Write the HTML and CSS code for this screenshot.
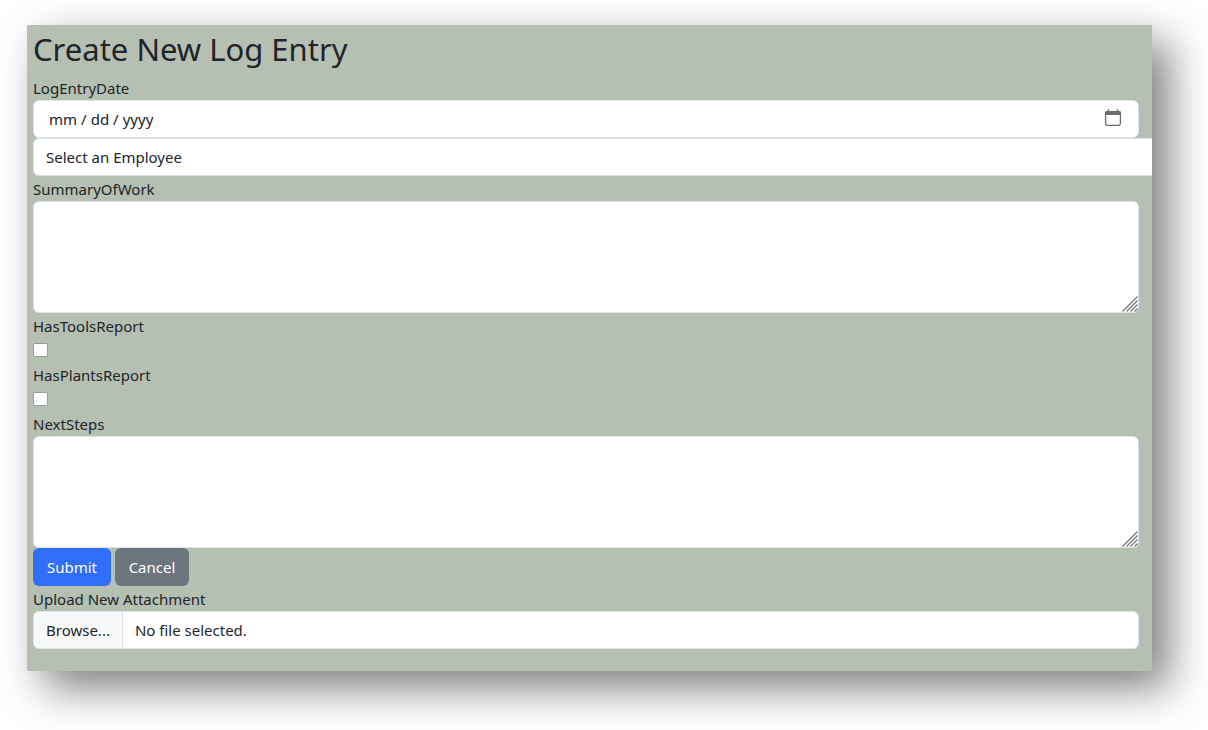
FILE: index.html
```html
<!DOCTYPE html>
<html lang="en-US">
<head>
<meta charset="utf-8">
<meta name="viewport" content="width=device-width, initial-scale=1">
<title>Create New Log Entry</title>
<link rel="stylesheet" href="styles.css">
</head>
<body>
<main class="panel">
  <h2 class="title">Create New Log Entry</h2>
  <form>
    <label class="label" for="entry-date">LogEntryDate</label>
    <div class="field">
      <input class="control date" type="date" id="entry-date">
      <svg class="calendar" viewBox="0 0 18 18" aria-hidden="true">
        <path d="M1 3.500Q1 2 2.500 2H15.500Q17 2 17 3.500V6H1Z" fill="#6b6b70"/>
        <path d="M4.500 1V3M13.500 1V3" stroke="#6b6b70" stroke-width="1.600" stroke-linecap="round"/>
        <rect x="1.600" y="3" width="14.800" height="13.300" rx="1.800" fill="none" stroke="#6b6b70" stroke-width="1.300"/>
      </svg>
    </div>
    <select class="control employee" aria-label="Employee">
      <option>Select an Employee</option>
    </select>
    <label class="label" for="summary">SummaryOfWork</label>
    <div class="field">
      <textarea class="control area" id="summary"></textarea>
      <svg class="grip" viewBox="0 0 16 16" aria-hidden="true"><path d="M0.500 15.500L15.500 0.500M4.500 15.500L15.500 4.500M8.500 15.500L15.500 8.500M12.500 15.500L15.500 12.500"/></svg>
    </div>
    <label class="label" for="tools">HasToolsReport</label>
    <div class="check-row"><input class="check" type="checkbox" id="tools"></div>
    <label class="label" for="plants">HasPlantsReport</label>
    <div class="check-row"><input class="check" type="checkbox" id="plants"></div>
    <label class="label" for="next">NextSteps</label>
    <div class="field">
      <textarea class="control area" id="next"></textarea>
      <svg class="grip" viewBox="0 0 16 16" aria-hidden="true"><path d="M0.500 15.500L15.500 0.500M4.500 15.500L15.500 4.500M8.500 15.500L15.500 8.500M12.500 15.500L15.500 12.500"/></svg>
    </div>
    <div class="actions">
      <button class="btn primary" type="submit">Submit</button>
      <button class="btn secondary" type="button">Cancel</button>
    </div>
    <label class="label" for="attachment">Upload New Attachment</label>
    <div class="field">
      <input class="file-input" type="file" id="attachment">
      <label class="control file" for="attachment">
        <span class="browse">Browse...</span>
        <span class="file-name">No file selected.</span>
      </label>
    </div>
  </form>
</main>
</body>
</html>
```
FILE: styles.css
```css
* {
  box-sizing: border-box;
}

body {
  margin: 0;
  padding: 25px 56px 59px 27px;
  background: #fff;
  color: #212529;
  font: 15px/24px "Segoe UI", "Noto Sans", sans-serif;
}

.panel {
  padding: 5px 13px 22px 6px;
  overflow: hidden;
  background: #b5c0b3;
  box-shadow: 17px 17px 40px rgba(0, 0, 0, 0.5);
}

.title {
  margin: 0 0 7px;
  font-size: 31px;
  font-weight: 400;
  line-height: 38px;
}

.label {
  display: block;
  padding-top: 2px;
  line-height: 23px;
}

.field {
  position: relative;
}

.control {
  display: block;
  width: 100%;
  height: 38px;
  padding: 6px 12px;
  border: 1px solid #dee2e6;
  border-radius: 6px;
  background: #fff;
  color: #212529;
  font: inherit;
}

.date {
  padding-left: 14px;
}

.date::-webkit-datetime-edit-fields-wrapper {
  padding: 0;
}

.date::-webkit-datetime-edit-text {
  padding: 0 3px;
}

.date::-webkit-calendar-picker-indicator {
  opacity: 0;
}

.calendar {
  position: absolute;
  top: 9px;
  right: 17px;
  width: 18px;
  height: 18px;
  pointer-events: none;
}

.employee {
  width: calc(100% + 40px);
  appearance: none;
}

.area {
  height: 112px;
  resize: vertical;
}

.area::-webkit-resizer {
  background: transparent;
}

.grip {
  position: absolute;
  right: 1px;
  bottom: 1px;
  width: 16px;
  height: 16px;
  fill: none;
  stroke: #77777a;
  stroke-width: 1.3;
  pointer-events: none;
}

.check-row {
  display: flex;
  align-items: center;
  height: 24px;
}

.check {
  width: 15px;
  height: 14px;
  margin: 0;
  appearance: none;
  border: 1px solid #9a9aa3;
  border-radius: 2px;
  background: #fff;
}

.check:checked {
  background: #2f6df6;
}

.actions {
  display: flex;
  gap: 4px;
}

.btn {
  height: 38px;
  padding: 6px 12px;
  border: 1px solid transparent;
  border-radius: 6px;
  color: #fff;
  font: inherit;
}

.primary {
  min-width: 78px;
  background: #306df8;
}

.secondary {
  min-width: 74px;
  background: #6c757d;
}

.file-input {
  position: absolute;
  width: 100%;
  height: 100%;
  opacity: 0;
}

.file {
  display: flex;
  padding: 0;
  overflow: hidden;
}

.browse {
  padding: 6px 12px;
  border-right: 1px solid #dee2e6;
  background: #f8f9fa;
}

.file-name {
  padding: 6px 12px;
}
```
